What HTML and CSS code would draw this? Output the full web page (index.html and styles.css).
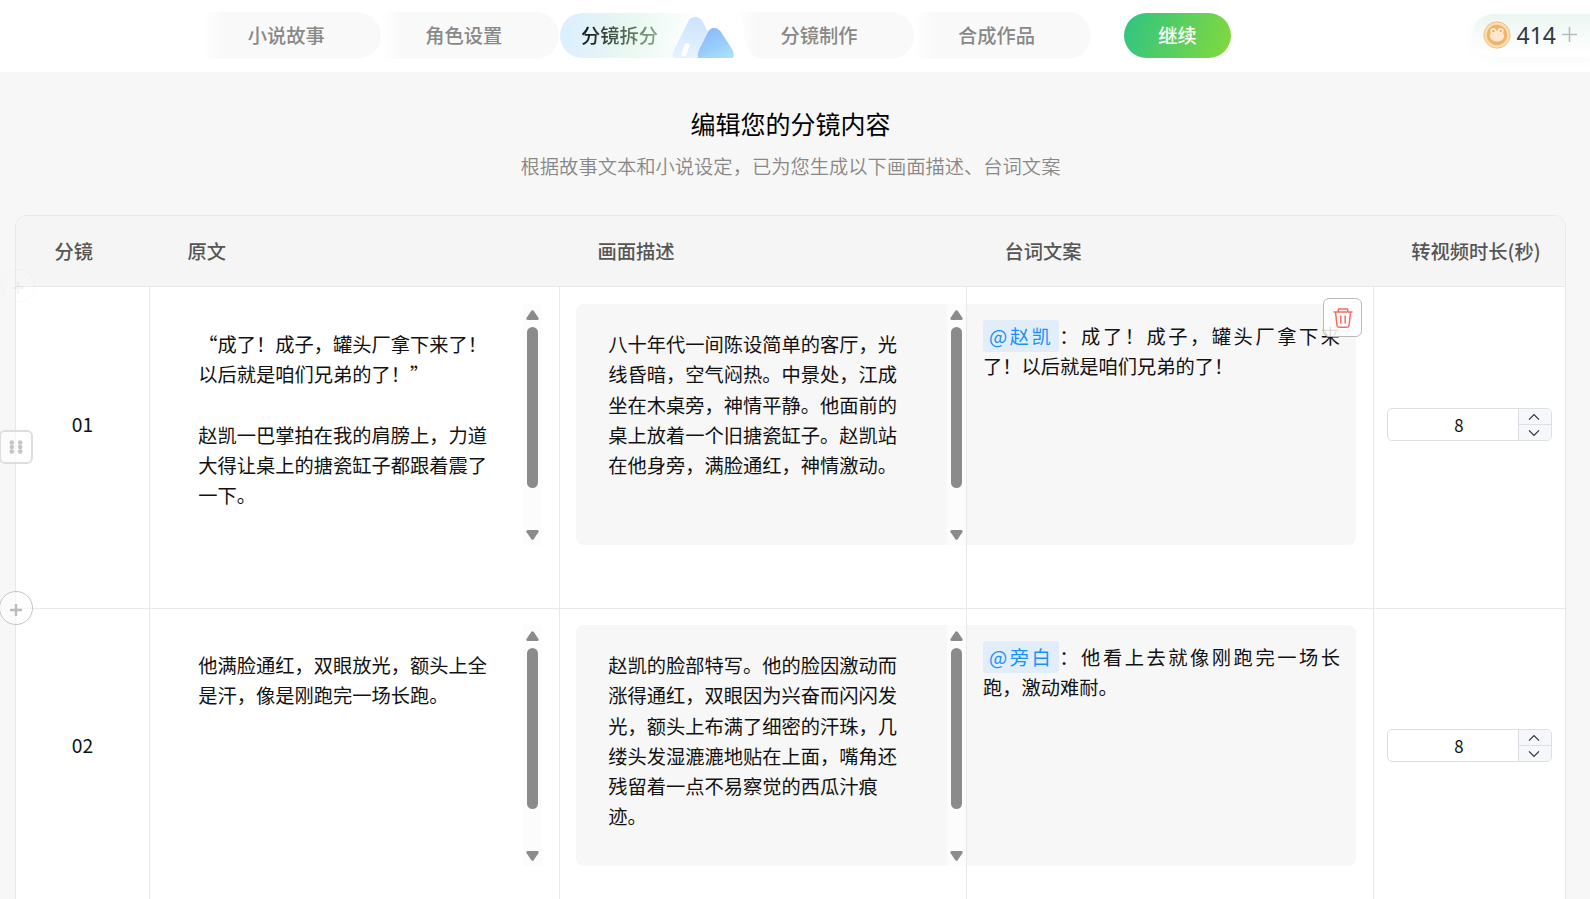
FILE: index.html
```html
<!DOCTYPE html>
<html lang="zh-CN">
<head>
<meta charset="utf-8">
<title>编辑您的分镜内容</title>
<link rel="stylesheet" href="styles.css">
</head>
<body>
<svg class="defs" width="0" height="0">
  <symbol id="up" viewBox="0 0 13 10"><path d="M5.2 1.1Q6.5-.7 7.8 1.1L12.4 7.8Q13.2 10 11.2 10H1.8Q-.2 10 .6 7.8Z" fill="#8b8b8b"/></symbol>
  <symbol id="down" viewBox="0 0 13 10"><path d="M5.2 8.9Q6.5 10.7 7.8 8.9L12.4 2.2Q13.2 0 11.2 0H1.8Q-.2 0 .6 2.2Z" fill="#8b8b8b"/></symbol>
  <symbol id="chev-up" viewBox="0 0 12 8"><path d="M1 6.7 6 1.7 11 6.7" fill="none" stroke="#303133" stroke-width="1.2"/></symbol>
  <symbol id="chev-down" viewBox="0 0 12 8"><path d="M1 1.3 6 6.3 11 1.3" fill="none" stroke="#303133" stroke-width="1.2"/></symbol>
</svg>

<header class="topbar">
  <nav class="steps">
    <div class="step">小说故事</div>
    <div class="step">角色设置</div>
    <div class="step active">
      <div class="pill"><span>分镜拆分</span></div>
      <svg class="peaks" width="100" height="52" viewBox="660 10 100 52">
        <defs>
          <linearGradient id="g1" x1="0" y1="0" x2="0" y2="1"><stop offset="0" stop-color="#cbe3fd"/><stop offset="1" stop-color="#e6f3ff"/></linearGradient>
          <linearGradient id="g2" x1="0.3" y1="0" x2="0.9" y2="1"><stop offset="0" stop-color="#8bb9fa"/><stop offset=".5" stop-color="#98cbfb"/><stop offset="1" stop-color="#a9e4f6"/></linearGradient>
        </defs>
        <path d="M715 10H733C745 13 742 30 746 42Q750 56 760 60H715Z" fill="#fff"/>
        <path d="M673 58Q672 54 674 50L688 22Q690 17 695 17Q700 17 703 22L721 58Z" fill="url(#g1)"/>
        <path d="M698 58Q697 54 699 50L708 32Q710 28 714 28Q718 28 721 32L732 49Q735 54 733 58Z" fill="url(#g2)"/>
        <path d="M684 54 687 45.5" stroke="#fff" stroke-width="5" stroke-linecap="round"/>
      </svg>
    </div>
    <div class="step">分镜制作</div>
    <div class="step">合成作品</div>
  </nav>
  <button class="go">继续</button>
  <div class="coins">
    <svg width="28" height="28" viewBox="0 0 28 28">
      <circle cx="14" cy="14" r="13.2" fill="#fbdcb4" stroke="#f3b67c" stroke-width=".8"/>
      <circle cx="14" cy="14" r="10.300" fill="#f0b469"/>
      <circle cx="10.300" cy="10" r="3" fill="#fde8cd"/><circle cx="17.700" cy="10" r="3" fill="#fde8cd"/>
      <ellipse cx="14" cy="15" rx="7.200" ry="5.500" fill="#fde8cd"/>
      <circle cx="10.300" cy="10" r="1" fill="#ee9b6b"/><circle cx="17.700" cy="10" r="1" fill="#ee9b6b"/>
    </svg>
    <span class="amount">414</span>
    <svg class="plus" width="15" height="15" viewBox="0 0 15 15"><path d="M7.500 0V15M0 7.500H15" stroke="#b4bfbb" stroke-width="1.600"/></svg>
  </div>
</header>

<main class="page">
  <h1>编辑您的分镜内容</h1>
  <p class="sub">根据故事文本和小说设定，已为您生成以下画面描述、台词文案</p>

  <section class="table">
    <div class="row head">
      <div class="c1">分镜</div><div>原文</div><div>画面描述</div><div class="c4">台词文案</div><div class="c5">转视频时长(秒)</div>
    </div>

    <div class="row first">
      <div class="cell num">01</div>
      <div class="cell">
        <div class="area plain">
          <div class="txt">“成了！成子，罐头厂拿下来了！<br>以后就是咱们兄弟的了！”<br><br>赵凯一巴掌拍在我的肩膀上，力道<br>大得让桌上的搪瓷缸子都跟着震了<br>一下。</div>
          <div class="bar"><svg><use href="#up"/></svg><i></i><svg class="end"><use href="#down"/></svg></div>
        </div>
      </div>
      <div class="cell">
        <div class="area">
          <div class="txt">八十年代一间陈设简单的客厅，光<br>线昏暗，空气闷热。中景处，江成<br>坐在木桌旁，神情平静。他面前的<br>桌上放着一个旧搪瓷缸子。赵凯站<br>在他身旁，满脸通红，神情激动。</div>
          <div class="bar"><svg><use href="#up"/></svg><i></i><svg class="end"><use href="#down"/></svg></div>
        </div>
      </div>
      <div class="cell">
        <div class="lines">
          <div class="full"><span class="tag">@赵凯</span>：成了！成子，罐头厂拿下来</div>
          <div>了！以后就是咱们兄弟的了！</div>
        </div>
        <button class="trash">
          <svg width="20" height="20" viewBox="0 0 20 20" fill="none" stroke="#ff6a5e" stroke-width="1.500"><path d="M.500 4H19.500M5 3.800 5.600 1H14.400L15 3.800M2.500 4 4 17.500Q4.200 19.200 6 19.200H14Q15.800 19.200 16 17.500L17.500 4M7.800 7.500V15.500M12.200 7.500V15.500"/></svg>
        </button>
      </div>
      <div class="cell last">
        <div class="stepper"><b>8</b><div class="btns"><span><svg><use href="#chev-up"/></svg></span><span><svg><use href="#chev-down"/></svg></span></div></div>
      </div>
      <div class="add ghost"><svg width="12" height="12" viewBox="0 0 12 12"><path d="M6 0V12M0 6H12" stroke="#999" stroke-width="2.200"/></svg></div>
      <div class="drag"><svg width="14" height="14" viewBox="0 0 14 14" fill="#c0c4cc"><circle cx="2.800" cy="2.500" r="2.300"/><circle cx="2.800" cy="7" r="2.300"/><circle cx="2.800" cy="11.500" r="2.300"/><circle cx="11.200" cy="2.500" r="2.300"/><circle cx="11.200" cy="7" r="2.300"/><circle cx="11.200" cy="11.500" r="2.300"/></svg></div>
      <div class="add"><svg width="12" height="12" viewBox="0 0 12 12"><path d="M6 0V12M0 6H12" stroke="#b9bbbd" stroke-width="2.400"/></svg></div>
    </div>

    <div class="row">
      <div class="cell num">02</div>
      <div class="cell">
        <div class="area plain">
          <div class="txt">他满脸通红，双眼放光，额头上全<br>是汗，像是刚跑完一场长跑。</div>
          <div class="bar"><svg><use href="#up"/></svg><i></i><svg class="end"><use href="#down"/></svg></div>
        </div>
      </div>
      <div class="cell">
        <div class="area">
          <div class="txt">赵凯的脸部特写。他的脸因激动而<br>涨得通红，双眼因为兴奋而闪闪发<br>光，额头上布满了细密的汗珠，几<br>缕头发湿漉漉地贴在上面，嘴角还<br>残留着一点不易察觉的西瓜汁痕<br>迹。</div>
          <div class="bar"><svg><use href="#up"/></svg><i></i><svg class="end"><use href="#down"/></svg></div>
        </div>
      </div>
      <div class="cell">
        <div class="lines">
          <div class="full"><span class="tag">@旁白</span>：他看上去就像刚跑完一场长</div>
          <div>跑，激动难耐。</div>
        </div>
      </div>
      <div class="cell last">
        <div class="stepper"><b>8</b><div class="btns"><span><svg><use href="#chev-up"/></svg></span><span><svg><use href="#chev-down"/></svg></span></div></div>
      </div>
    </div>
  </section>
</main>
</body>
</html>
```

FILE: styles.css
```css
* { box-sizing: border-box; }
html, body { margin: 0; height: 899px; overflow: hidden; }
body {
  background: #f7f7f7;
  color: #111;
  font: 19.250px/30.200px "Noto Sans CJK SC", sans-serif;
}
button { padding: 0; border: 0; font: inherit; }
svg { display: block; flex: none; }
.defs { position: absolute; }

/* top bar */
.topbar {
  display: flex;
  align-items: flex-start;
  height: 72px;
  padding-left: 203.400px;
  background: #fff;
}
.steps { display: flex; padding-top: 12px; }
.step {
  width: 177.600px;
  height: 47px;
  padding-right: 12px;
  border-radius: 0 24px 24px 0;
  background: linear-gradient(90deg, #fff, #f9f9f9 20px);
  color: #888;
  font-weight: 500;
  line-height: 46px;
  text-align: center;
}
.step.active {
  position: relative;
  z-index: 1;
  padding: 1px 0 0 1.500px;
  background: none;
  text-align: left;
}
.pill {
  height: 45px;
  padding-left: 21px;
  border-radius: 23px;
  background: linear-gradient(100deg, #dceffe 5%, #e9f8f1 40%, #fff 78%);
  line-height: 44px;
}
.pill span {
  display: inline-block;
  background: linear-gradient(90deg, #1c211d 10%, #84ad87);
  background-clip: text;
  -webkit-background-clip: text;
  color: transparent;
}
.peaks { position: absolute; left: 101.500px; top: -2px; }
.go {
  width: 107px;
  height: 45px;
  margin: 13px 0 0 32.600px;
  border-radius: 23px;
  background: linear-gradient(110deg, #32c580 5%, #80d840 95%);
  color: #fff;
  font-weight: 500;
  line-height: 43px;
}
.coins {
  display: flex;
  align-items: center;
  width: 140px;
  height: 43px;
  margin: 14px -22px 0 auto;
  padding: 0 0 2px 11px;
  border-radius: 22px;
  background: linear-gradient(#ebf6f1, #fff 90%);
  box-shadow: 0 2px 18px rgba(0, 0, 0, .025);
}
.amount {
  margin: 0 6.500px 0 5.500px;
  color: #303842;
  font: 23px/40px "Noto Sans", sans-serif;
}

/* heading */
.page { padding: 0 24px 0 15px; }
h1 {
  margin: 34px 0 0;
  color: #000;
  font-size: 25px;
  font-weight: 400;
  line-height: 34px;
  text-align: center;
}
.sub {
  margin: 11px 0 0;
  color: #888;
  font-size: 19.300px;
  font-weight: 350;
  line-height: 30px;
  text-align: center;
}

/* storyboard table */
.table {
  margin-top: 34px;
  border: 1px solid #e8e8e8;
  border-radius: 12px 12px 0 0;
  background: #fff;
}
.row {
  position: relative;
  display: grid;
  grid-template-columns: 134px 410px 407px 407px 191px;
  height: 322px;
}
.row.head {
  height: 71px;
  border-bottom: 1px solid #e8e8e8;
  border-radius: 11px 11px 0 0;
  background: #f5f5f5;
  color: #555;
  font-weight: 500;
  line-height: 71px;
}
.head > div { padding-left: 37.500px; }
.head .c1 { padding-left: 38.500px; }
.head .c5 { padding-left: 37.300px; white-space: nowrap; }
.cell {
  position: relative;
  padding: 16px 0 0 16px;
  border-right: 1px solid #e8e8e8;
  border-bottom: 1px solid #e8e8e8;
}
.first .cell { padding-top: 17px; }
.cell.last { border-right: 0; padding-left: 13px; }
.cell.num { padding: 121px 0 0; text-align: center; }
.first .cell.num { padding-top: 122px; }
.area {
  display: flex;
  justify-content: space-between;
  height: 241px;
  border-radius: 8px 0 0 8px;
  background: #f7f7f7;
}
.area.plain { width: 376px; background: none; }
.txt { padding: 25.200px 0 0 32.200px; white-space: nowrap; }
.bar {
  display: flex;
  flex-direction: column;
  align-items: center;
  width: 19px;
  padding: 6px 0 5px;
  background: #fcfcfc;
}
.bar svg { width: 13px; height: 10px; }
.bar i {
  width: 11px;
  height: 161px;
  margin-top: 7px;
  border-radius: 6px;
  background: #8b8b8b;
}
.bar .end { margin-top: auto; }
.lines {
  width: 389px;
  height: 241px;
  margin-left: -16px;
  padding: 17px 16px 0;
  border-radius: 0 8px 8px 0;
  background: #f7f7f7;
}
.full { text-align: justify; text-align-last: justify; white-space: nowrap; }
.tag {
  padding: 2px 6px;
  border-radius: 3px;
  background: #e1eefa;
  color: #1890ff;
}

/* overlaid row controls */
.trash {
  position: absolute;
  right: 11px;
  top: 11px;
  display: grid;
  place-items: center;
  width: 39px;
  height: 39px;
  border: 1px solid #b9b9b9;
  border-radius: 6px;
  background: rgba(255, 255, 255, .85);
}
.drag, .add {
  position: absolute;
  left: -17px;
  display: grid;
  place-items: center;
  width: 34px;
  height: 34px;
}
.drag {
  top: 143px;
  border: 2px solid #dedede;
  border-radius: 6px;
  background: rgba(255, 255, 255, .6);
}
.add {
  top: 304px;
  padding-top: 3px;
  border: 1px solid #c4c6c8;
  border-radius: 50%;
  background: rgba(255, 255, 255, .5);
}
.add.ghost { left: -15px; top: -18px; opacity: .1; }

/* number field */
.stepper {
  display: flex;
  width: 165px;
  height: 33px;
  margin-top: 104px;
  border: 1px solid #dcdfe6;
  border-radius: 5px;
  background: #fff;
}
.stepper b {
  flex: 1;
  padding-left: 12px;
  font-size: 16.800px;
  font-weight: 400;
  line-height: 32px;
  text-align: center;
}
.btns {
  display: grid;
  grid-template-rows: 15px 16px;
  width: 33px;
  border-left: 1px solid #dcdfe6;
  border-radius: 0 4px 4px 0;
  background: #f5f7fa;
}
.btns span { display: grid; place-items: center; padding-right: 2px; }
.btns span + span { border-top: 1px solid #dcdfe6; }
.btns svg { width: 12px; height: 8px; }
```
